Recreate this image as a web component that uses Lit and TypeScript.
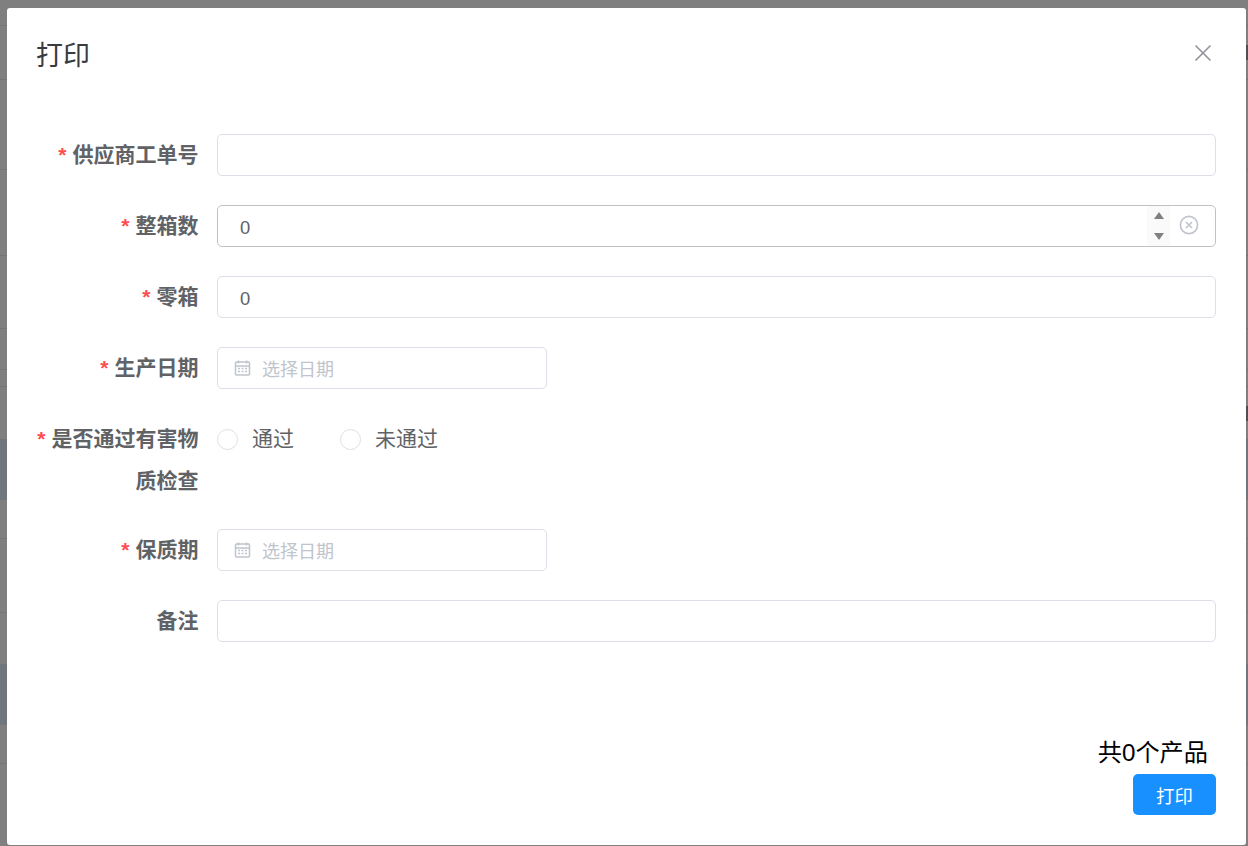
import { LitElement, html, css, svg } from "lit";
import { customElement } from "lit/decorators.js";

const BG_ROWS: { h: number; band?: boolean; mark?: boolean }[] = [
  { h: 26 },
  { h: 54, mark: true },
  { h: 90 },
  { h: 86 },
  { h: 73 },
  { h: 41 },
  { h: 17 },
  { h: 53, mark: true },
  { h: 60, band: true },
  { h: 39 },
  { h: 74 },
  { h: 52 },
  { h: 60, band: true },
  { h: 39 },
  { h: 83 },
];

const calendar = svg`<svg class="cal" viewBox="0 0 17 16" width="17" height="16" fill="none" stroke="#c0c4cc" stroke-width="1.5">
  <rect x="1.5" y="2" width="14" height="13" rx="1"></rect>
  <path d="M1 6h15M4.5 0.5v3M12.5 0.5v3"></path>
  <path d="M4 8.5h2M7.5 8.5h2M11 8.5h2M4 11.5h2M7.5 11.5h2M11 11.5h2" stroke-width="1.3"></path>
</svg>`;

@customElement("app-root")
export class AppRoot extends LitElement {
  static styles = css`
    :host {
      display: block;
      position: relative;
      width: 1248px;
      height: 846px;
      overflow: hidden;
      background: #7f7f7f;
      font-family: "Liberation Sans", "Noto Sans CJK SC", sans-serif;
    }
    .bgrow {
      box-sizing: border-box;
      border-bottom: 1px solid #747474;
      display: flex;
      justify-content: flex-end;
      align-items: center;
    }
    .bgrow.band {
      background: #6f767e;
      border-bottom: none;
    }
    .mark {
      width: 2px;
      height: 15px;
      background: #4d4f55;
    }
    .modal {
      position: absolute;
      left: 7px;
      top: 8px;
      width: 1239px;
      height: 837px;
      box-sizing: border-box;
      background: #fff;
      border-radius: 3px;
      padding: 0 30px 30px 0;
      display: flex;
      flex-direction: column;
    }
    .head {
      height: 94px;
      padding: 29px 0 0 29px;
      box-sizing: border-box;
      position: relative;
    }
    .title {
      font-size: 27px;
      line-height: 39px;
      color: #3a3b3e;
    }
    .close {
      position: absolute;
      right: 4px;
      top: 36px;
      width: 18px;
      height: 18px;
      stroke: #909399;
      stroke-width: 1.6;
      fill: none;
    }
    .form {
      margin-top: 32px;
      display: flex;
      flex-direction: column;
      gap: 29px;
    }
    .row {
      display: flex;
      height: 42px;
    }
    .row.tall {
      height: 82px;
    }
    .label {
      width: 210px;
      flex: none;
      box-sizing: border-box;
      padding: 0 18.5px 0 26px;
      text-align: right;
      font-size: 21px;
      font-weight: 700;
      line-height: 42px;
      color: #606266;
    }
    .req {
      color: #ff4d4f;
      margin-right: 6px;
      font-size: 21px;
    }
    .input {
      flex: 1;
      box-sizing: border-box;
      height: 42px;
      border: 1px solid #dcdfe6;
      border-radius: 5px;
      display: flex;
      align-items: center;
      padding: 3px 0 0 22px;
      font-size: 18.4px;
      color: #606266;
      position: relative;
    }
    .input.hover {
      border-color: #bfc1c7;
    }
    .input.date {
      flex: none;
      width: 330px;
      padding: 0 0 0 16px;
      gap: 11px;
      font-size: 18px;
      color: #c0c4cc;
    }
    .cal {
      flex: none;
    }
    .spin {
      position: absolute;
      right: 45px;
      top: 0;
      bottom: 0;
      width: 23px;
      background: #fafafa;
      display: flex;
      flex-direction: column;
      align-items: center;
      justify-content: space-between;
      padding: 6px 0;
      box-sizing: border-box;
    }
    .spin i {
      width: 0;
      height: 0;
      border-left: 5.5px solid transparent;
      border-right: 5.5px solid transparent;
    }
    .spin .up {
      border-bottom: 7px solid #808080;
    }
    .spin .down {
      border-top: 7px solid #808080;
    }
    .clear {
      position: absolute;
      right: 16px;
      top: 9px;
      width: 20px;
      height: 20px;
      fill: none;
      stroke: #c0c4cc;
      stroke-width: 1.6;
    }
    .radios {
      display: flex;
      height: 42px;
      align-items: center;
      gap: 46px;
    }
    .radio {
      display: flex;
      align-items: center;
      gap: 14px;
      font-size: 21px;
      color: #606266;
    }
    .radio span.txt {
      margin-top: -4px;
    }
    .dot {
      width: 21px;
      height: 21px;
      box-sizing: border-box;
      border: 1px solid #dcdfe6;
      border-radius: 50%;
    }
    .foot {
      margin-top: auto;
      display: flex;
      flex-direction: column;
      align-items: flex-end;
    }
    .total {
      font-size: 24.2px;
      line-height: 36px;
      color: #000;
      margin: 0 8px 3px 0;
    }
    .btn {
      width: 83px;
      height: 41px;
      background: #1890ff;
      border-radius: 5px;
      color: #fff;
      font-size: 18.4px;
      display: flex;
      align-items: center;
      justify-content: center;
    }
  `;

  private label(text: string, req = true) {
    return html`<div class="label">${req ? html`<span class="req">*</span>` : ""}${text}</div>`;
  }

  private dateRow(text: string) {
    return html`<div class="row">
      ${this.label(text)}
      <div class="input date">${calendar}<span>选择日期</span></div>
    </div>`;
  }

  render() {
    return html`
      ${BG_ROWS.map(
        (r) => html`<div class="bgrow ${r.band ? "band" : ""}" style="height:${r.h}px">
          ${r.mark ? html`<span class="mark"></span>` : ""}
        </div>`
      )}
      <div class="modal">
        <div class="head">
          <div class="title">打印</div>
          <svg class="close" viewBox="0 0 18 18"><path d="M1.5 1.5l15 15M16.5 1.5l-15 15"></path></svg>
        </div>
        <div class="form">
          <div class="row">${this.label("供应商工单号")}<div class="input"></div></div>
          <div class="row">
            ${this.label("整箱数")}
            <div class="input hover">
              0
              <div class="spin"><i class="up"></i><i class="down"></i></div>
              <svg class="clear" viewBox="0 0 20 20">
                <circle cx="10" cy="10" r="8.6"></circle>
                <path d="M7 7l6 6M13 7l-6 6"></path>
              </svg>
            </div>
          </div>
          <div class="row">${this.label("零箱")}<div class="input">0</div></div>
          ${this.dateRow("生产日期")}
          <div class="row tall">
            ${this.label("是否通过有害物质检查")}
            <div class="radios">
              <div class="radio"><span class="dot"></span><span class="txt">通过</span></div>
              <div class="radio"><span class="dot"></span><span class="txt">未通过</span></div>
            </div>
          </div>
          ${this.dateRow("保质期")}
          <div class="row">${this.label("备注", false)}<div class="input"></div></div>
        </div>
        <div class="foot">
          <div class="total">共0个产品</div>
          <div class="btn">打印</div>
        </div>
      </div>
    `;
  }
}
